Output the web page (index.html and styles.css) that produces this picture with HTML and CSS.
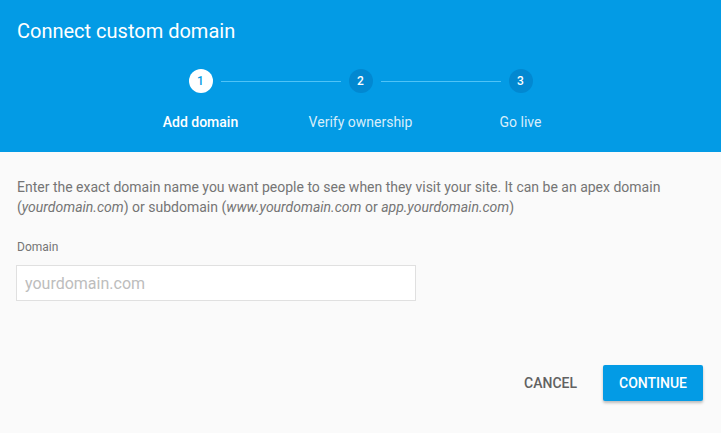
FILE: index.html
```html
<!DOCTYPE html>
<html>
<head>
<meta charset="utf-8">
<link rel="stylesheet" href="styles.css">
</head>
<body>
<div class="dialog">
  <header class="header">
    <h1 class="title">Connect custom domain</h1>
    <div class="stepper">
      <div class="circles">
        <span class="circle active">1</span>
        <span class="line"></span>
        <span class="circle">2</span>
        <span class="line"></span>
        <span class="circle">3</span>
      </div>
      <div class="labels">
        <span class="label active">Add domain</span>
        <span class="label">Verify ownership</span>
        <span class="label">Go live</span>
      </div>
    </div>
  </header>
  <main class="content">
    <p class="desc">Enter the exact domain name you want people to see when they visit your site. It can be an apex domain (<em>yourdomain.com</em>) or subdomain (<em>www.yourdomain.com</em> or <em>app.yourdomain.com</em>)</p>
    <label class="field-label">Domain</label>
    <input class="input" type="text" placeholder="yourdomain.com">
  </main>
  <footer class="actions">
    <button class="btn btn-flat">Cancel</button>
    <button class="btn btn-primary">Continue</button>
  </footer>
</div>
</body>
</html>
```

FILE: styles.css
```css
* { box-sizing: border-box; }
html, body { margin: 0; padding: 0; }
body {
  width: 721px;
  height: 433px;
  background: #fafafa;
  font-family: Roboto, "Liberation Sans", Arial, sans-serif;
  overflow: hidden;
}
.dialog { display: flex; flex-direction: column; height: 433px; }
.header {
  background: #039be5;
  height: 152px;
  padding: 19px 17px 0;
  color: #fff;
}
.title {
  margin: 0;
  font-size: 20px;
  font-weight: 400;
  line-height: 24px;
}
.stepper {
  display: flex;
  flex-direction: column;
  align-items: center;
  margin-top: 26px;
}
.circles {
  display: flex;
  align-items: center;
  height: 24px;
}
.circle {
  width: 24px;
  height: 24px;
  border-radius: 50%;
  background: #0288d1;
  color: #fff;
  font-size: 12px;
  font-weight: 500;
  display: flex;
  align-items: center;
  justify-content: center;
}
.circle.active { background: #fff; color: #039be5; }
.line {
  width: 120px;
  height: 1px;
  margin: 0 8px;
  background: #4fc3f7;
}
.labels {
  display: grid;
  grid-template-columns: 160px 160px 160px;
  margin-top: 19px;
}
.label {
  text-align: center;
  font-size: 14px;
  line-height: 20px;
  color: rgba(255,255,255,0.85);
}
.label.active { color: #fff; font-weight: 500; }
.content {
  padding: 25px 17px 0 17px;
  flex: 1;
}
.desc {
  margin: 0;
  font-size: 14px;
  line-height: 20px;
  color: #757575;
}
.field-label {
  display: block;
  margin-top: 22px;
  font-size: 12px;
  line-height: 16px;
  color: #757575;
}
.input {
  display: block;
  margin: 10px 0 0 -1px;
  width: 400px;
  height: 36px;
  border: 1px solid #e0e0e0;
  background: #fff;
  padding: 0 8px;
  font-family: inherit;
  font-size: 16px;
  color: #212121;
  outline: none;
}
.input::placeholder { color: #bdbdbd; }
.actions {
  display: flex;
  justify-content: flex-end;
  align-items: center;
  gap: 10px;
  padding: 0 18px 32px;
}
.btn {
  font-family: inherit;
  font-size: 14px;
  font-weight: 500;
  text-transform: uppercase;
  border: none;
  border-radius: 2px;
  height: 36px;
  padding: 0 16px;
  cursor: pointer;
}
.btn-flat { background: transparent; color: #616161; }
.btn-primary {
  background: #039be5;
  color: #fff;
  width: 100px;
  box-shadow: 0 2px 3px rgba(0,0,0,0.25);
}
```
